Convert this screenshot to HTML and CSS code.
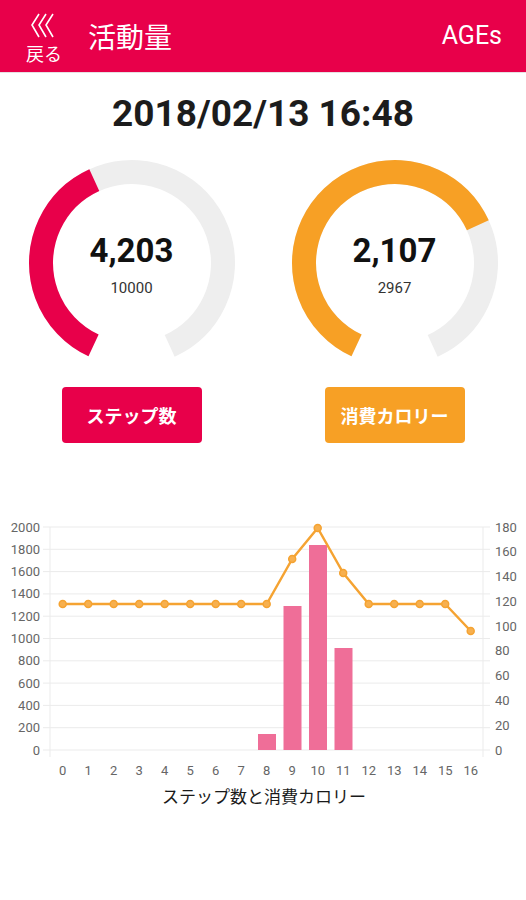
FILE: index.html
```html
<!DOCTYPE html>
<html lang="ja">
<head>
<meta charset="utf-8">
<title>活動量</title>
<link rel="stylesheet" href="styles.css">
</head>
<body>
<header class="appbar">
  <div class="back">
    <svg class="chev" width="30" height="26" viewBox="0 0 30 26">
      <polyline points="10,1 3,12 10,24" />
      <polyline points="17,1 10,12 17,24" />
      <polyline points="24,1 17,12 24,24" />
    </svg>
    <span class="back-label">戻る</span>
  </div>
  <h1 class="title">活動量</h1>
  <span class="brand">AGEs</span>
</header>

<div class="datetime">2018/02/13 16:48</div>

<section class="gauges">
  <div class="gauge-col">
    <div class="gauge">
      <svg width="210" height="210" viewBox="0 0 210 210">
        <circle class="track" cx="105" cy="105" r="91" stroke-dasharray="492.4 600" transform="rotate(115 105 105)"/>
        <circle class="arc-red" cx="105" cy="105" r="91" stroke-dasharray="207 600" transform="rotate(115 105 105)"/>
      </svg>
      <div class="gauge-text">
        <div class="gauge-value">4,203</div>
        <div class="gauge-goal">10000</div>
      </div>
    </div>
    <button class="btn btn-red">ステップ数</button>
  </div>
  <div class="gauge-col">
    <div class="gauge">
      <svg width="210" height="210" viewBox="0 0 210 210">
        <circle class="track" cx="105" cy="105" r="91" stroke-dasharray="492.4 600" transform="rotate(115 105 105)"/>
        <circle class="arc-orange" cx="105" cy="105" r="91" stroke-dasharray="349.7 600" transform="rotate(115 105 105)"/>
      </svg>
      <div class="gauge-text">
        <div class="gauge-value">2,107</div>
        <div class="gauge-goal">2967</div>
      </div>
    </div>
    <button class="btn btn-orange">消費カロリー</button>
  </div>
</section>

<section class="chart">
  <svg width="526" height="300" viewBox="0 510 526 300">
    <g class="grid">
      <line x1="43" y1="750" x2="490" y2="750"/>
      <line x1="43" y1="727.7" x2="490" y2="727.7"/>
      <line x1="43" y1="705.4" x2="490" y2="705.4"/>
      <line x1="43" y1="683.1" x2="490" y2="683.1"/>
      <line x1="43" y1="660.8" x2="490" y2="660.8"/>
      <line x1="43" y1="638.5" x2="490" y2="638.5"/>
      <line x1="43" y1="616.2" x2="490" y2="616.2"/>
      <line x1="43" y1="593.9" x2="490" y2="593.9"/>
      <line x1="43" y1="571.6" x2="490" y2="571.6"/>
      <line x1="43" y1="549.3" x2="490" y2="549.3"/>
      <line x1="43" y1="527" x2="490" y2="527"/>
      <line x1="50" y1="527" x2="50" y2="757"/>
      <line x1="483" y1="527" x2="483" y2="757"/>
    </g>
    <g class="ylabels-left">
      <text x="40" y="754.5">0</text>
      <text x="40" y="732.2">200</text>
      <text x="40" y="709.9">400</text>
      <text x="40" y="687.6">600</text>
      <text x="40" y="665.3">800</text>
      <text x="40" y="643">1000</text>
      <text x="40" y="620.7">1200</text>
      <text x="40" y="598.4">1400</text>
      <text x="40" y="576.1">1600</text>
      <text x="40" y="553.8">1800</text>
      <text x="40" y="531.5">2000</text>
    </g>
    <g class="ylabels-right">
      <text x="495" y="754.5">0</text>
      <text x="495" y="729.7">20</text>
      <text x="495" y="704.9">40</text>
      <text x="495" y="680.2">60</text>
      <text x="495" y="655.4">80</text>
      <text x="495" y="630.6">100</text>
      <text x="495" y="605.8">120</text>
      <text x="495" y="581.1">140</text>
      <text x="495" y="556.3">160</text>
      <text x="495" y="531.5">180</text>
    </g>
    <g class="bars">
      <rect x="258" y="734" width="18" height="16"/>
      <rect x="283.5" y="606" width="18" height="144"/>
      <rect x="309" y="545" width="18" height="205"/>
      <rect x="334.5" y="648" width="18" height="102"/>
    </g>
    <polyline class="line" points="62.7,604 88.2,604 113.7,604 139.2,604 164.7,604 190.2,604 215.7,604 241.2,604 266.7,604 292.2,559 317.7,528 343.2,573 368.7,604 394.2,604 419.7,604 445.2,604 470.7,631"/>
    <g class="points">
      <circle cx="62.7" cy="604" r="3.5"/><circle cx="88.2" cy="604" r="3.5"/><circle cx="113.7" cy="604" r="3.5"/>
      <circle cx="139.2" cy="604" r="3.5"/><circle cx="164.7" cy="604" r="3.5"/><circle cx="190.2" cy="604" r="3.5"/>
      <circle cx="215.7" cy="604" r="3.5"/><circle cx="241.2" cy="604" r="3.5"/><circle cx="266.7" cy="604" r="3.5"/>
      <circle cx="292.2" cy="559" r="3.5"/><circle cx="317.7" cy="528" r="3.5"/><circle cx="343.2" cy="573" r="3.5"/>
      <circle cx="368.7" cy="604" r="3.5"/><circle cx="394.2" cy="604" r="3.5"/><circle cx="419.7" cy="604" r="3.5"/>
      <circle cx="445.2" cy="604" r="3.5"/><circle cx="470.7" cy="631" r="3.5"/>
    </g>
    <g class="xlabels">
      <text x="62.7" y="775">0</text><text x="88.2" y="775">1</text><text x="113.7" y="775">2</text>
      <text x="139.2" y="775">3</text><text x="164.7" y="775">4</text><text x="190.2" y="775">5</text>
      <text x="215.7" y="775">6</text><text x="241.2" y="775">7</text><text x="266.7" y="775">8</text>
      <text x="292.2" y="775">9</text><text x="317.7" y="775">10</text><text x="343.2" y="775">11</text>
      <text x="368.7" y="775">12</text><text x="394.2" y="775">13</text><text x="419.7" y="775">14</text>
      <text x="445.2" y="775">15</text><text x="470.7" y="775">16</text>
    </g>
    <text class="chart-title" x="264" y="803">ステップ数と消費カロリー</text>
  </svg>
</section>
</body>
</html>
```

FILE: styles.css
```css
* { box-sizing: border-box; }
html, body { margin: 0; padding: 0; background: #fff; }
body {
  width: 526px;
  font-family: Roboto, "Noto Sans CJK JP", sans-serif;
  color: #1a1a1a;
}
.appbar {
  height: 73px;
  background: #e8004a;
  border-bottom: 1px solid #e6e0e2;
  display: flex;
  align-items: center;
  padding: 0 24px 0 24px;
  color: #fff;
}
.back {
  width: 40px;
  display: flex;
  flex-direction: column;
  align-items: center;
  margin-top: 4px;
}
.chev { display: block; }
.chev polyline { fill: none; stroke: #fff; stroke-width: 1.6; stroke-linejoin: miter; }
.back-label {
  font-family: "Noto Sans CJK JP", sans-serif;
  font-size: 18px;
  line-height: 22px;
  margin-top: 3px;
}
.title {
  margin: 0 0 0 24px;
  font-family: "Noto Sans CJK JP", sans-serif;
  font-weight: 400;
  font-size: 28px;
  line-height: 34px;
  flex: 1;
}
.brand {
  font-family: Roboto, sans-serif;
  font-size: 25px;
  line-height: 30px;
}
.datetime {
  margin-top: 19px;
  text-align: center;
  font-family: Roboto, sans-serif;
  font-weight: 700;
  font-size: 37px;
  line-height: 44px;
  color: #1c1c1c;
}
.gauges {
  display: flex;
  margin-top: 22px;
}
.gauge-col {
  width: 263px;
  display: flex;
  flex-direction: column;
  align-items: center;
}
.gauge {
  position: relative;
  width: 210px;
  height: 210px;
}
.gauge svg { display: block; }
.gauge circle { fill: none; stroke-width: 24; }
.track { stroke: #eeeeee; }
.arc-red { stroke: #e8004a; }
.arc-orange { stroke: #f7a025; }
.gauge-text {
  position: absolute;
  left: 0; right: 0; top: 73px;
  text-align: center;
}
.gauge-value {
  font-weight: 700;
  font-size: 33px;
  line-height: 40px;
  color: #111;
}
.gauge-goal {
  font-size: 15px;
  line-height: 20px;
  margin-top: 7px;
  color: #333;
}
.btn {
  margin-top: 19px;
  width: 140px;
  height: 56px;
  border: 0;
  border-radius: 4px;
  color: #fff;
  font-family: "Noto Sans CJK JP", sans-serif;
  font-weight: 700;
  font-size: 18px;
}
.btn-red { background: #e8004a; }
.btn-orange { background: #f7a025; }
.chart { margin-top: 67px; }
.chart svg { display: block; }
.grid line { stroke: #ebebeb; stroke-width: 1; }
.ylabels-left text, .ylabels-right text, .xlabels text {
  font-family: Roboto, sans-serif;
  font-size: 13px;
  fill: #666;
}
.ylabels-left text { text-anchor: end; }
.ylabels-right text { text-anchor: start; }
.xlabels text { text-anchor: middle; }
.bars rect { fill: #ef6e98; }
.line { fill: none; stroke: #f5a332; stroke-width: 2.5; stroke-linejoin: round; }
.points circle { fill: #f7b04f; stroke: #f5a332; stroke-width: 1.5; }
.chart-title {
  font-family: "Noto Sans CJK JP", sans-serif;
  font-size: 17px;
  fill: #1a1a1a;
  text-anchor: middle;
}
```
